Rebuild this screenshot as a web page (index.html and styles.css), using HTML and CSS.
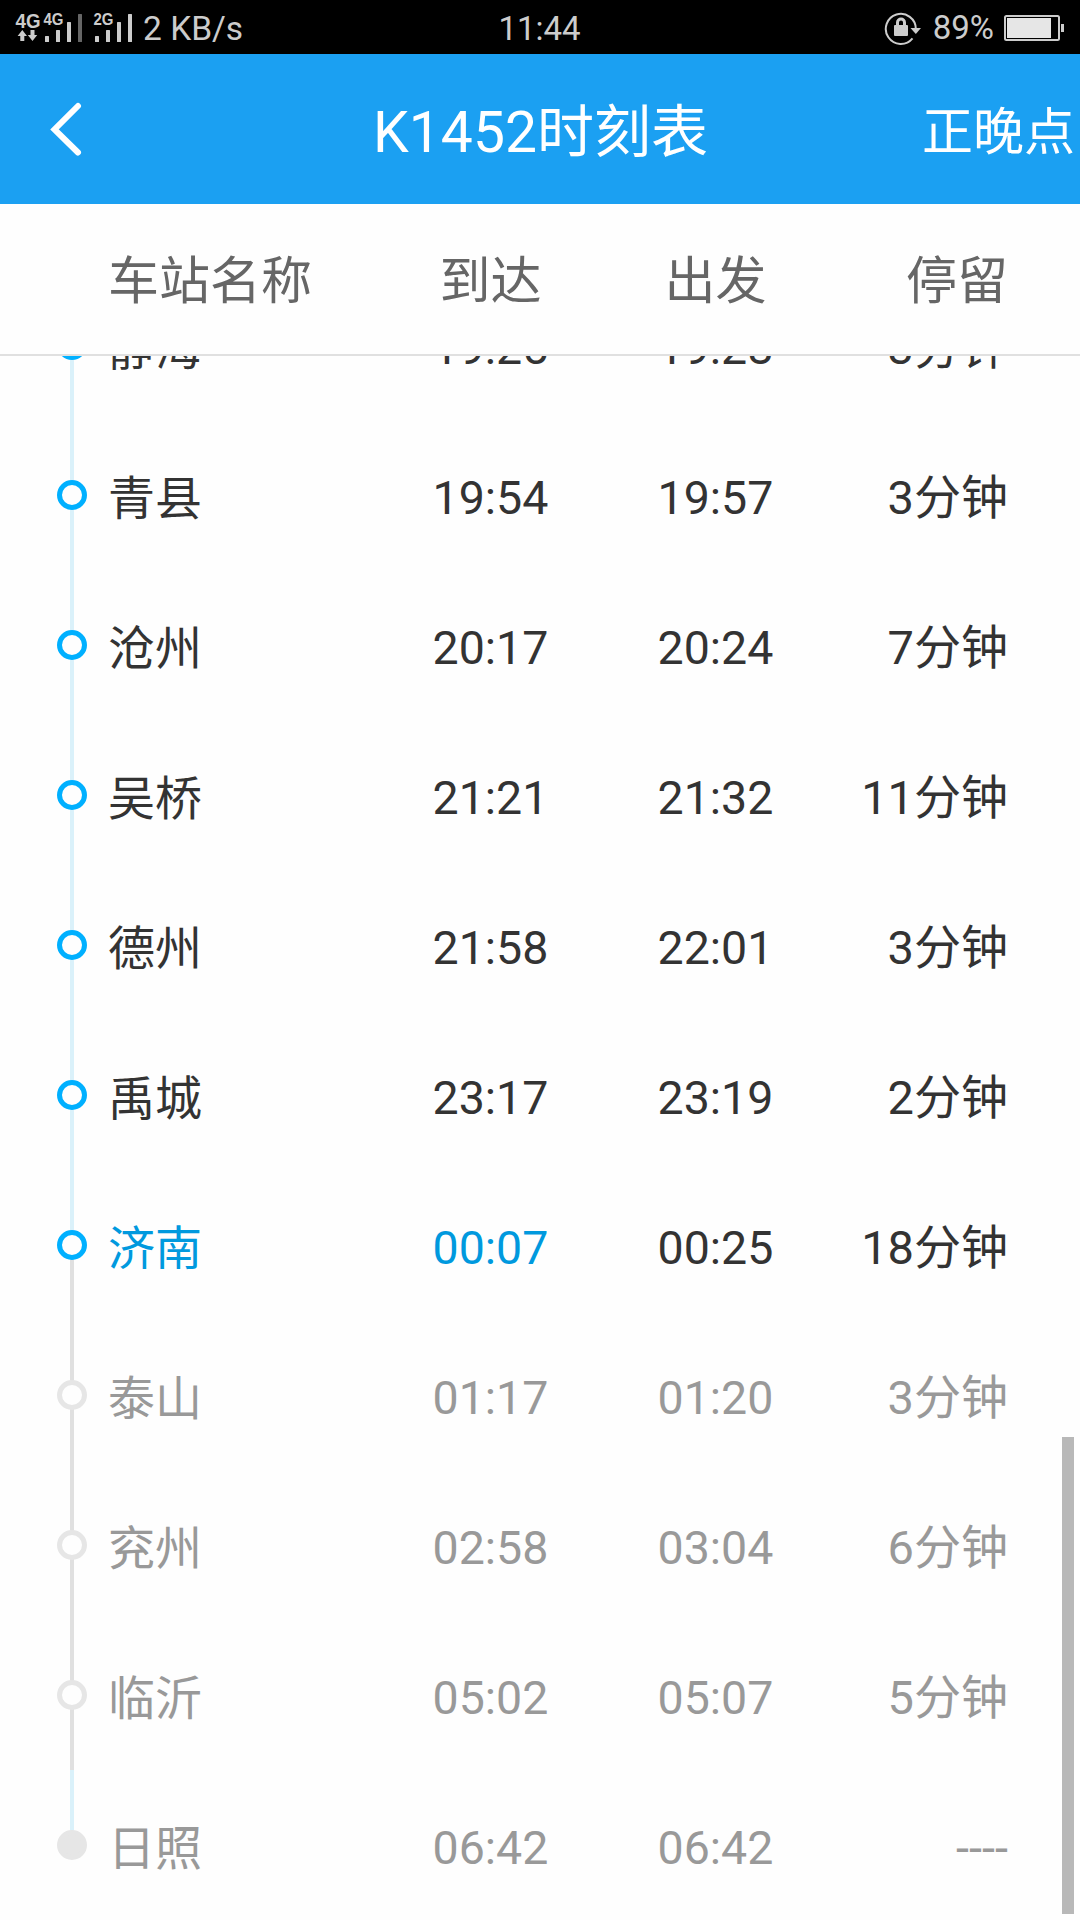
FILE: index.html
```html
<!DOCTYPE html>
<html lang="zh-CN">
<head>
    <meta charset="UTF-8">
    <meta name="viewport" content="width=device-width, initial-scale=1.0">
    <title>K1452时刻表</title>
    <link rel="stylesheet" href="styles.css">
</head>
<body>
    <div class="status-bar">
        <div class="status-left">
            <svg class="signal" width="118" height="32" viewBox="15 11 118 32">
                <text class="net-main" x="15.5" y="26.8" textLength="25" lengthAdjust="spacingAndGlyphs">4G</text>
                <path d="M22.300 29l4.700 6h-2.700v5h-4v-5h-2.700zM32.500 40l-4.700-6h2.700v-5h4v5h2.700z"/>
                <text class="net-sub" x="43.5" y="24.2" textLength="20" lengthAdjust="spacingAndGlyphs">4G</text>
                <rect x="45" y="35" width="4" height="6" rx="0.5"/>
                <rect x="56" y="29" width="4" height="12" rx="0.5"/>
                <rect x="67" y="21" width="4" height="20" rx="0.5"/>
                <rect class="off" x="78" y="13" width="4" height="28" rx="0.5"/>
                <text class="net-sub" x="93.5" y="24.2" textLength="20" lengthAdjust="spacingAndGlyphs">2G</text>
                <rect x="95" y="35" width="4" height="6" rx="0.5"/>
                <rect x="106" y="29" width="4" height="12" rx="0.5"/>
                <rect x="117" y="21" width="4" height="20" rx="0.5"/>
                <rect x="128" y="13" width="4" height="28" rx="0.5"/>
            </svg>
            <span class="speed">2 KB/s</span>
        </div>
        <div class="clock">11:44</div>
        <div class="status-right">
            <svg class="lock" width="38" height="34" viewBox="883 10 38 34">
                <path class="ring" d="M911.5 37.300A15 15 0 1 1 914.800 28"/>
                <path d="M909.500 27h10.500l-5.200 6z"/>
                <path class="shackle" d="M896.5 26v-4.500a3.500 3.500 0 0 1 7 0V26"/>
                <rect x="893" y="24" width="14" height="11" rx="1"/>
            </svg>
            <span class="percent">89%</span>
            <svg class="battery" width="60" height="26" viewBox="1004 14 60 26">
                <rect class="case" x="1005" y="15" width="54" height="24" rx="1.500"/>
                <rect class="level" x="1007" y="17" width="44" height="20"/>
                <rect x="1061" y="23" width="3" height="8"/>
            </svg>
        </div>
    </div>

    <header class="header">
        <svg class="back" width="32" height="56" viewBox="0 0 32 56">
            <path d="M28 5L4.500 28.500 28 51.500"/>
        </svg>
        <h1 class="title">K1452时刻表</h1>
        <span class="punctual">正晚点</span>
    </header>

    <div class="columns">
        <span class="name">车站名称</span>
        <span class="time">到达</span>
        <span class="time">出发</span>
        <span class="stay">停留</span>
    </div>

    <main class="list">
        <div class="scrollbar"></div>
        <div class="row">
            <div class="track"><i class="dot"></i></div>
            <span class="name">静海</span><span class="time">19:25</span><span class="time">19:28</span><span class="stay">3分钟</span>
        </div>
        <div class="row">
            <div class="track"><i class="dot"></i></div>
            <span class="name">青县</span><span class="time">19:54</span><span class="time">19:57</span><span class="stay">3分钟</span>
        </div>
        <div class="row">
            <div class="track"><i class="dot"></i></div>
            <span class="name">沧州</span><span class="time">20:17</span><span class="time">20:24</span><span class="stay">7分钟</span>
        </div>
        <div class="row">
            <div class="track"><i class="dot"></i></div>
            <span class="name">吴桥</span><span class="time">21:21</span><span class="time">21:32</span><span class="stay">11分钟</span>
        </div>
        <div class="row">
            <div class="track"><i class="dot"></i></div>
            <span class="name">德州</span><span class="time">21:58</span><span class="time">22:01</span><span class="stay">3分钟</span>
        </div>
        <div class="row">
            <div class="track"><i class="dot"></i></div>
            <span class="name">禹城</span><span class="time">23:17</span><span class="time">23:19</span><span class="stay">2分钟</span>
        </div>
        <div class="row current">
            <div class="track"><i class="dot"></i></div>
            <span class="name">济南</span><span class="time">00:07</span><span class="time">00:25</span><span class="stay">18分钟</span>
        </div>
        <div class="row after">
            <div class="track"><i class="dot"></i></div>
            <span class="name">泰山</span><span class="time">01:17</span><span class="time">01:20</span><span class="stay">3分钟</span>
        </div>
        <div class="row after">
            <div class="track"><i class="dot"></i></div>
            <span class="name">兖州</span><span class="time">02:58</span><span class="time">03:04</span><span class="stay">6分钟</span>
        </div>
        <div class="row after">
            <div class="track"><i class="dot"></i></div>
            <span class="name">临沂</span><span class="time">05:02</span><span class="time">05:07</span><span class="stay">5分钟</span>
        </div>
        <div class="row after last">
            <div class="track"><i class="dot"></i></div>
            <span class="name">日照</span><span class="time">06:42</span><span class="time">06:42</span><span class="stay">----</span>
        </div>
    </main>
</body>
</html>
```
FILE: styles.css
```css
:root {
    --blue: #1ba0f2;
    --dot: #00b0ff;
    --current: #0099de;
    --text: #333;
    --muted: #999;
    --line: #daf1fa;
    --line-muted: #e0e0e0;
    --status: #ccc;
    --background: #fefefe;
}

* {
    box-sizing: border-box;
    margin: 0;
    padding: 0;
}

body {
    display: flex;
    flex-direction: column;
    height: 1920px;
    overflow: hidden;
    background: var(--background);
    color: var(--text);
    font-family: Roboto, "Noto Sans CJK SC", sans-serif;
}

/* status bar */
.status-bar {
    display: grid;
    grid-template-columns: 1fr auto 1fr;
    align-items: center;
    flex: none;
    height: 54px;
    padding: 0 16px 0 15px;
    background: #000;
    color: var(--status);
    font-size: 33px;
    line-height: 54px;
}

.status-bar svg {
    display: block;
    fill: var(--status);
}

.status-left,
.status-right {
    display: flex;
    align-items: center;
}

.status-right {
    justify-content: flex-end;
}

.net-main,
.net-sub {
    font-family: "Liberation Sans", sans-serif;
    font-weight: 700;
}

.net-main {
    font-size: 20px;
}

.net-sub {
    font-size: 16.5px;
}

.signal {
    overflow: visible;
}

.signal .off {
    fill: #666;
}

.speed {
    margin-left: 10px;
    padding-top: 1px;
    font-size: 33.5px;
}

.clock {
    padding-top: 2px;
}

.lock .ring,
.lock .shackle {
    fill: none;
    stroke: var(--status);
    stroke-width: 2;
}

.lock .shackle {
    stroke-width: 3;
}

.percent {
    margin: 0 10px 0 11px;
}

.battery .case {
    fill: none;
    stroke: var(--status);
    stroke-width: 2;
}

.battery .level {
    fill: #e6e6e6;
}

/* title bar */
.header {
    display: grid;
    grid-template-columns: 1fr auto 1fr;
    align-items: center;
    flex: none;
    height: 150px;
    padding: 0 5px 0 50px;
    background: var(--blue);
    color: #fff;
    line-height: 70px;
}

.back {
    fill: none;
    stroke: #fff;
    stroke-width: 6;
    stroke-linecap: round;
}

.title {
    margin-right: 44px;
    padding-top: 8px;
    font-size: 57px;
    font-weight: 400;
}

.punctual {
    padding-top: 8px;
    font-size: 51px;
    text-align: right;
}

/* column names */
.columns {
    display: flex;
    align-items: center;
    flex: none;
    height: 152px;
    padding: 6px 72px 0 108px;
    border-bottom: 2px solid #e0e0e0;
    color: #666;
    font-size: 51px;
    line-height: 70px;
}

.name {
    width: 270px;
}

.time {
    width: 225px;
    text-align: center;
}

.stay {
    flex: 1;
    text-align: right;
}

/* station list, scrolled to its end */
.list {
    position: relative;
    display: flex;
    flex-direction: column;
    justify-content: flex-end;
    flex: 1;
    min-height: 0;
    overflow: hidden;
}

.row {
    display: flex;
    align-items: center;
    flex: none;
    height: 150px;
    padding: 0 72px 0 57px;
    font-size: 47px;
    line-height: 60px;
}

.row span {
    padding-top: 5px;
}

.row .name {
    padding-top: 7px;
}

.row .time {
    font-size: 46.5px;
}

.track {
    display: flex;
    align-items: center;
    justify-content: center;
    width: 30px;
    height: 150px;
    margin-right: 21px;
    background: linear-gradient(var(--line), var(--line)) center / 4px 100% no-repeat;
}

.dot {
    width: 30px;
    height: 30px;
    border: 5px solid var(--dot);
    border-radius: 50%;
    background: var(--background);
}

.current .track {
    background-image: linear-gradient(var(--line) 50%, var(--line-muted) 50%);
}

.current .name,
.current .name + .time {
    color: var(--current);
}

.after {
    color: var(--muted);
}

.after .track {
    background-image: linear-gradient(var(--line-muted), var(--line-muted));
}

.after .dot {
    border-color: #e6e6e6;
}

.last .track {
    background-image: linear-gradient(var(--line) 50%, transparent 50%);
}

.last .dot {
    background: #e6e6e6;
}

.scrollbar {
    position: absolute;
    right: 6px;
    bottom: 6px;
    width: 12px;
    height: 477px;
    background: #b8b8b8;
}
```
